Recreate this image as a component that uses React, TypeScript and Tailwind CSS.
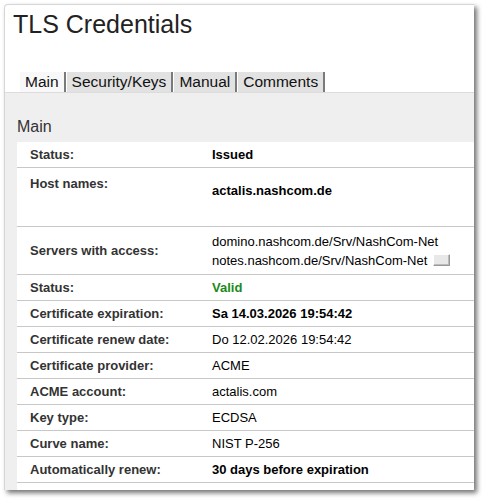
const font = { fontFamily: '"Liberation Sans", Arial, sans-serif' };

type Row = {
  label: string;
  value: React.ReactNode;
  h?: string;
};

const TABS = ["Main", "Security/Keys", "Manual", "Comments"];

function Cell({ label, value, h = "h-[26px]" }: Row) {
  return (
    <div className={`flex ${h} items-center border-b border-[#c8c8c8]`}>
      <div className="w-[195px] shrink-0 pl-[13px] text-[13px] font-bold text-[#333]">{label}</div>
      <div className="text-[13px] text-black">{value}</div>
    </div>
  );
}

export default function App() {
  return (
    <div className="h-[500px] w-[484px] bg-white pl-[4px] pt-[4px]" style={font}>
      <div className="flex h-[486px] w-[470px] flex-col overflow-hidden rounded-tl-[4px] border-l border-t border-[#d6d6d6] bg-white shadow-[3px_3px_5px_rgba(0,0,0,0.55)]">
        <h1 className="pl-[8px] pt-[4px] text-[25px] leading-[30px] text-[#222]">TLS Credentials</h1>

        <div className="mt-[33px] flex h-[20px] pl-[15px] text-[15.5px] leading-[20px] text-[#111]">
          {TABS.map((t, i) => (
            <div
              key={t}
              className={`mr-[1px] border-r-2 border-[#7a7a7a] px-[5px] ${i === 0 ? "bg-[#f8f8f8]" : "bg-[#e2e2e2]"}`}
            >
              {t}
            </div>
          ))}
        </div>

        <div className="flex flex-1 flex-col border-t border-[#dcdcdc] bg-[#efefef] pl-[12px]">
          <div className="pt-[25px] text-[16px] leading-[18px] text-[#333]">Main</div>
          <div className="mt-[6px] flex-1 bg-white">
            <Cell label="Status:" value={<span className="font-bold">Issued</span>} />
            <div className="flex h-[59px] border-b border-[#c8c8c8]">
              <div className="w-[195px] shrink-0 pl-[13px] pt-[6px] text-[13px] font-bold text-[#333]">Host names:</div>
              <div className="pt-[13px] text-[13px] font-bold text-black">actalis.nashcom.de</div>
            </div>
            <div className="flex h-[48px] items-center border-b border-[#c8c8c8]">
              <div className="w-[195px] shrink-0 pl-[13px] text-[13px] font-bold text-[#333]">Servers with access:</div>
              <div className="text-[13px] leading-[19px] text-black">
                <div>domino.nashcom.de/Srv/NashCom-Net</div>
                <div className="flex items-center">
                  notes.nashcom.de/Srv/NashCom-Net
                  <span className="ml-[6px] inline-block h-[12px] w-[17px] border border-[#999] border-l-[#fff] border-t-[#fff] bg-[#e8e8e8] shadow-[inset_-1px_-1px_0_#bbb]" />
                </div>
              </div>
            </div>
            <Cell label="Status:" value={<span className="font-bold text-[#1a8a1a]">Valid</span>} />
            <Cell label="Certificate expiration:" value={<span className="font-bold">Sa 14.03.2026 19:54:42</span>} />
            <Cell label="Certificate renew date:" value="Do 12.02.2026 19:54:42" />
            <Cell label="Certificate provider:" value="ACME" />
            <Cell label="ACME account:" value="actalis.com" />
            <Cell label="Key type:" value="ECDSA" />
            <Cell label="Curve name:" value="NIST P-256" />
            <Cell label="Automatically renew:" value={<span className="font-bold">30 days before expiration</span>} />
            <Cell label="Renewal notification:" value="" />
          </div>
        </div>
      </div>
    </div>
  );
}
